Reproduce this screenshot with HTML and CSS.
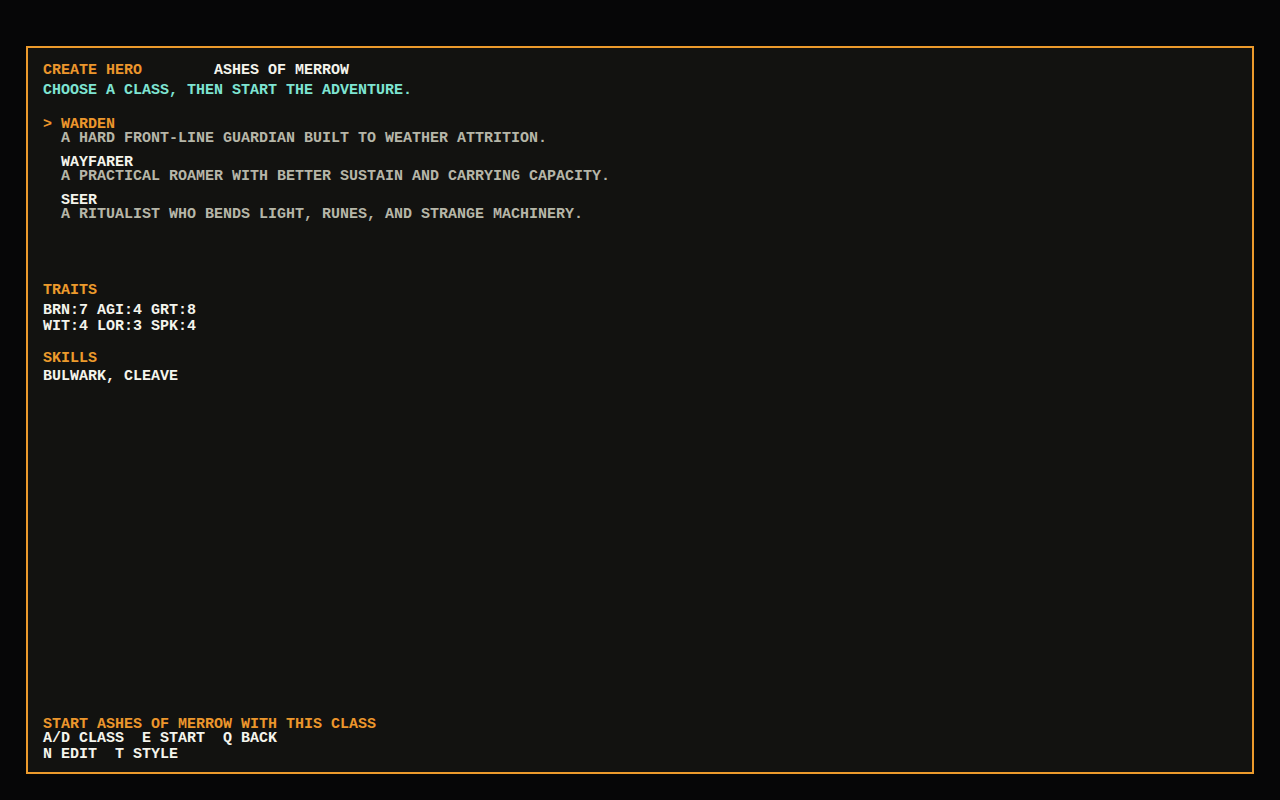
FILE: index.html
```html
<!DOCTYPE html>
<html lang="en">
<head>
<meta charset="utf-8">
<title>Create Hero</title>
<link rel="stylesheet" href="styles.css">
</head>
<body>
<div class="frame">
  <div class="head">
    <div class="row"><span class="title">CREATE HERO</span><span class="game">ASHES OF MERROW</span></div>
    <div class="row sub">CHOOSE A CLASS, THEN START THE ADVENTURE.</div>
  </div>
  <div class="classes">
    <div class="cls selected">
      <div class="name"><span class="cursor">&gt;</span>WARDEN</div>
      <div class="desc">A HARD FRONT-LINE GUARDIAN BUILT TO WEATHER ATTRITION.</div>
    </div>
    <div class="cls">
      <div class="name"><span class="cursor"></span>WAYFARER</div>
      <div class="desc">A PRACTICAL ROAMER WITH BETTER SUSTAIN AND CARRYING CAPACITY.</div>
    </div>
    <div class="cls">
      <div class="name"><span class="cursor"></span>SEER</div>
      <div class="desc">A RITUALIST WHO BENDS LIGHT, RUNES, AND STRANGE MACHINERY.</div>
    </div>
  </div>
  <div class="section traits">
    <div class="label">TRAITS</div>
    <div class="line">BRN:7 AGI:4 GRT:8</div>
    <div class="line">WIT:4 LOR:3 SPK:4</div>
  </div>
  <div class="section skills">
    <div class="label">SKILLS</div>
    <div class="line">BULWARK, CLEAVE</div>
  </div>
  <div class="footer">
    <div class="hint">START ASHES OF MERROW WITH THIS CLASS</div>
    <div class="keys">A/D CLASS  E START  Q BACK</div>
    <div class="keys last">N EDIT  T STYLE</div>
  </div>
</div>
</body>
</html>
```

FILE: styles.css
```css
html, body {
  margin: 0;
  padding: 0;
  background: #060607;
}
body {
  width: 1280px;
  height: 800px;
  padding: 46px 26px;
  box-sizing: border-box;
  font-family: "Liberation Mono", "DejaVu Sans Mono", monospace;
  font-size: 15px;
  font-weight: bold;
  color: #f0f0e6;
}
.frame {
  height: 728px;
  box-sizing: border-box;
  border: 2px solid #ec9a2c;
  background: #121210;
  padding: 13px 15px 9px 15px;
  display: flex;
  flex-direction: column;
}
.row {
  line-height: 20px;
  white-space: pre;
  display: flex;
}
.title {
  color: #ec962c;
  width: 19ch;
}
.game { color: #f4f4ec; }
.sub { color: #7ee4d2; }
.classes {
  margin-top: 17px;
  display: flex;
  flex-direction: column;
  gap: 10px;
}
.cls .name, .cls .desc {
  line-height: 14px;
  white-space: pre;
}
.cursor {
  display: inline-block;
  width: 2ch;
  color: #ec962c;
}
.cls .name { color: #f4f4ec; }
.cls.selected .name { color: #ec962c; }
.desc {
  color: #b6b6a8;
  padding-left: 2ch;
}
.traits { margin-top: 61px; }
.skills { margin-top: 16px; }
.label {
  color: #ec9a2c;
  line-height: 16px;
  margin-bottom: 4px;
}
.skills .label { margin-bottom: 2px; }
.line {
  line-height: 16px;
  color: #f4f4ec;
}
.footer {
  margin-top: auto;
}
.hint {
  color: #ec962c;
  line-height: 14px;
}
.keys {
  line-height: 14px;
  white-space: pre;
  color: #f4f4ec;
}
.keys.last {
  line-height: 16px;
  margin-top: 1px;
}
```
